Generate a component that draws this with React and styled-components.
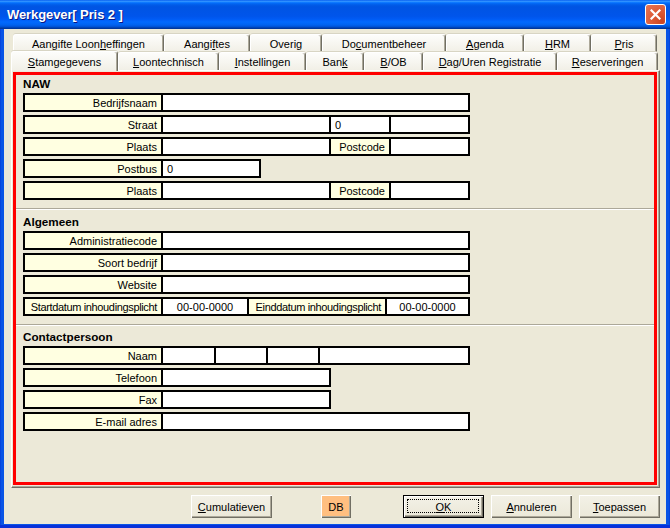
import React from 'react';
import styled, { createGlobalStyle } from 'styled-components';

const GlobalStyle = createGlobalStyle`
  html, body { margin: 0; padding: 0; background: #ffffff; }
  body {
    font-family: "Liberation Sans", Arial, sans-serif;
    font-size: 11px;
    color: #000;
  }
  * { box-sizing: border-box; }
`;

const Window = styled.div`
  width: 670px;
  height: 528px;
  display: flex;
  flex-direction: column;
`;

const TitleBar = styled.div`
  height: 29px;
  flex: none;
  display: flex;
  align-items: center;
  padding: 0 4px 0 7px;
  background: linear-gradient(to bottom, #0058ee 0%, #3593ff 4%, #288eff 6%, #127dff 8%, #036ffc 10%, #0262ee 14%, #0057e5 20%, #0054e3 24%, #0055eb 56%, #005bf5 66%, #026afe 76%, #0062ef 86%, #0052d6 92%, #0040ab 96%, #003092 100%);
`;

const Title = styled.div`
  font-family: "Liberation Sans", Arial, sans-serif;
  font-weight: bold;
  font-size: 13px;
  color: #fff;
  text-shadow: 1px 1px 0 #0a1883;
  letter-spacing: -0.1px;
`;

const CloseButton = styled.div`
  margin-left: auto;
  width: 21px;
  height: 21px;
  border: 1px solid #fff;
  border-radius: 3px;
  background: radial-gradient(circle at 85% 85%, #cc4622 0%, #dc5a36 45%, #e87656 100%);
  display: flex;
  align-items: center;
  justify-content: center;
`;

const Frame = styled.div`
  flex: 1;
  display: flex;
  padding: 0 4px 4px;
  background: #0a55e6;
  box-shadow: inset 0 -3px 0 #0831d9, inset 1px 0 0 #0846dd, inset -1px 0 0 #0846dd;
`;

const Body = styled.div`
  flex: 1;
  display: flex;
  flex-direction: column;
  background: #ece9d8;
  padding: 5px 6px 6px 7px;
`;

const TabRow = styled.div`
  display: flex;
  height: 18px;
  align-items: flex-end;
  padding-left: ${p => p.$indent || 0}px;
  position: relative;
  z-index: ${p => p.$front ? 2 : 1};
`;

const Tab = styled.div`
  width: ${p => p.$w}px;
  height: ${p => (p.$active ? 20 : 18)}px;
  display: flex;
  align-items: center;
  justify-content: center;
  white-space: nowrap;
  background: linear-gradient(to bottom, #fdfdfb, #f1efe6);
  border-top: 1px solid #ffffff;
  border-left: 1px solid #ffffff;
  border-right: 1px solid #716f64;
  box-shadow: inset -1px 0 0 #aca899, 0 -1px 0 #d8d5c4;
  border-radius: 3px 3px 0 0;
  padding-top: 1px;
  margin-bottom: ${p => (p.$active ? -1 : 0)}px;
`;

const Panel = styled.div`
  height: 418px;
  flex: none;
  display: flex;
  border-top: 1px solid #ffffff;
  border-left: 1px solid #ffffff;
  border-right: 1px solid #716f64;
  border-bottom: 1px solid #716f64;
  box-shadow: inset -1px -1px 0 #aca899;
  padding: 1px 2px 2px 1px;
`;

const RedBox = styled.div`
  flex: 1;
  border: 3px solid #ff0000;
  display: flex;
  flex-direction: column;
`;

const Section = styled.div`
  display: flex;
  flex-direction: column;
  padding: ${p => p.$top}px 0 8px 7px;
`;

const Heading = styled.div`
  height: 15px;
  line-height: 15px;
  font-weight: bold;
  font-size: 11.7px;
  margin-bottom: 2px;
`;

const Rows = styled.div`
  display: flex;
  flex-direction: column;
  gap: 3px;
`;

const Separator = styled.div`
  height: 2px;
  border-top: 1px solid #aca899;
  border-bottom: 1px solid #ffffff;
`;

const Row = styled.div`
  display: flex;
  width: ${p => p.$w}px;
  height: 19px;
  border: 2px solid #000;
  background: #fff;
`;

const Label = styled.div`
  width: ${p => p.$w}px;
  flex: ${p => (p.$w ? 'none' : '1')};
  background: #ffffe1;
  border-left: ${p => (p.$first ? 'none' : '2px solid #000')};
  display: flex;
  align-items: center;
  justify-content: flex-end;
  padding-right: 4px;
  white-space: nowrap;
  overflow: hidden;
  letter-spacing: ${p => (p.$tight ? '-0.35px' : '0')};
`;

const Field = styled.div`
  width: ${p => (p.$w ? `${p.$w}px` : 'auto')};
  flex: ${p => (p.$w ? 'none' : '1')};
  background: #fff;
  border-left: 2px solid #000;
  display: flex;
  align-items: center;
  justify-content: ${p => (p.$center ? 'center' : 'flex-start')};
  padding-left: ${p => (p.$center ? 0 : 4)}px;
  white-space: nowrap;
`;

const ButtonRow = styled.div`
  margin-top: 7px;
  height: 23px;
  display: flex;
  justify-content: flex-end;
`;

const Button = styled.div`
  position: relative;
  width: ${p => p.$w}px;
  height: 23px;
  margin-left: ${p => p.$ml}px;
  display: flex;
  align-items: center;
  justify-content: center;
  background: ${p => (p.$accent ? '#ffbf80' : 'linear-gradient(to bottom, #f3f1e7, #ebe8d8)')};
  border: ${p => (p.$default ? '1px solid #000' : 'none')};
  box-shadow: inset 1px 1px 0 #ffffff, inset -1px -1px 0 #716f64, inset -2px -2px 0 #aca899;
  padding-top: 1px;

  &::after {
    content: '';
    display: ${p => (p.$default ? 'block' : 'none')};
    position: absolute;
    left: 3px;
    top: 3px;
    right: 4px;
    bottom: 4px;
    border: 1px dotted #000;
  }
`;

const backTabs = [
  { w: 151, label: <>Aangifte Loon<u>h</u>effingen</> },
  { w: 86, label: <>Aangi<u>f</u>tes</> },
  { w: 72, label: <>Overig</> },
  { w: 124, label: <>Do<u>c</u>umentbeheer</> },
  { w: 78, label: <><u>A</u>genda</> },
  { w: 67, label: <><u>H</u>RM</> },
  { w: 66, label: <><u>P</u>ris</> },
];

const frontTabs = [
  { w: 107, label: <><u>S</u>tamgegevens</>, active: true },
  { w: 101, label: <><u>L</u>oontechnisch</> },
  { w: 87, label: <><u>I</u>nstellingen</> },
  { w: 58, label: <>Ban<u>k</u></> },
  { w: 59, label: <><u>B</u>/OB</> },
  { w: 134, label: <><u>D</u>ag/Uren Registratie</> },
  { w: 101, label: <><u>R</u>eserveringen</> },
];

const LW = 136;

function PlaatsRow() {
  return (
    <Row $w={447}>
      <Label $first $w={LW}>Plaats</Label>
      <Field $w={168} />
      <Label $w={60}>Postcode</Label>
      <Field />
    </Row>
  );
}

function SimpleRow({ label, w = 447, value }) {
  return (
    <Row $w={w}>
      <Label $first $w={LW}>{label}</Label>
      <Field>{value}</Field>
    </Row>
  );
}

export default function App() {
  return (
    <>
      <GlobalStyle />
      <Window>
        <TitleBar>
          <Title>Werkgever[ Pris 2 ]</Title>
          <CloseButton>
            <svg width="11" height="11" viewBox="0 0 11 11">
              <path d="M1.5 1.5 L9.5 9.5 M9.5 1.5 L1.5 9.5" stroke="#fff" strokeWidth="2.2" strokeLinecap="square" />
            </svg>
          </CloseButton>
        </TitleBar>
        <Frame>
          <Body>
            <TabRow $indent={2}>
              {backTabs.map((t, i) => (
                <Tab key={i} $w={t.w}>{t.label}</Tab>
              ))}
            </TabRow>
            <TabRow $front>
              {frontTabs.map((t, i) => (
                <Tab key={i} $w={t.w} $active={t.active}>{t.label}</Tab>
              ))}
            </TabRow>
            <Panel>
              <RedBox>
                <Section $top={1}>
                  <Heading>NAW</Heading>
                  <Rows>
                    <SimpleRow label="Bedrijfsnaam" />
                    <Row $w={447}>
                      <Label $first $w={LW}>Straat</Label>
                      <Field $w={168} />
                      <Field $w={60}>0</Field>
                      <Field />
                    </Row>
                    <PlaatsRow />
                    <SimpleRow label="Postbus" w={238} value="0" />
                    <PlaatsRow />
                  </Rows>
                </Section>
                <Separator />
                <Section $top={4}>
                  <Heading>Algemeen</Heading>
                  <Rows>
                    <SimpleRow label="Administratiecode" />
                    <SimpleRow label="Soort bedrijf" />
                    <SimpleRow label="Website" />
                    <Row $w={447}>
                      <Label $first $w={LW} $tight>Startdatum inhoudingsplicht</Label>
                      <Field $w={86} $center>00-00-0000</Field>
                      <Label $w={138} $tight>Einddatum inhoudingsplicht</Label>
                      <Field $center>00-00-0000</Field>
                    </Row>
                  </Rows>
                </Section>
                <Separator />
                <Section $top={3}>
                  <Heading>Contactpersoon</Heading>
                  <Rows>
                    <Row $w={447}>
                      <Label $first $w={LW}>Naam</Label>
                      <Field $w={53} />
                      <Field $w={52} />
                      <Field $w={52} />
                      <Field />
                    </Row>
                    <SimpleRow label="Telefoon" w={308} />
                    <SimpleRow label="Fax" w={308} />
                    <SimpleRow label="E-mail adres" />
                  </Rows>
                </Section>
              </RedBox>
            </Panel>
            <ButtonRow>
              <Button $w={81} $ml={0}><span><u>C</u>umulatieven</span></Button>
              <Button $w={30} $ml={49} $accent>DB</Button>
              <Button $w={81} $ml={52} $default><span><u>O</u>K</span></Button>
              <Button $w={81} $ml={7}><span><u>A</u>nnuleren</span></Button>
              <Button $w={81} $ml={7}><span><u>T</u>oepassen</span></Button>
            </ButtonRow>
          </Body>
        </Frame>
      </Window>
    </>
  );
}
